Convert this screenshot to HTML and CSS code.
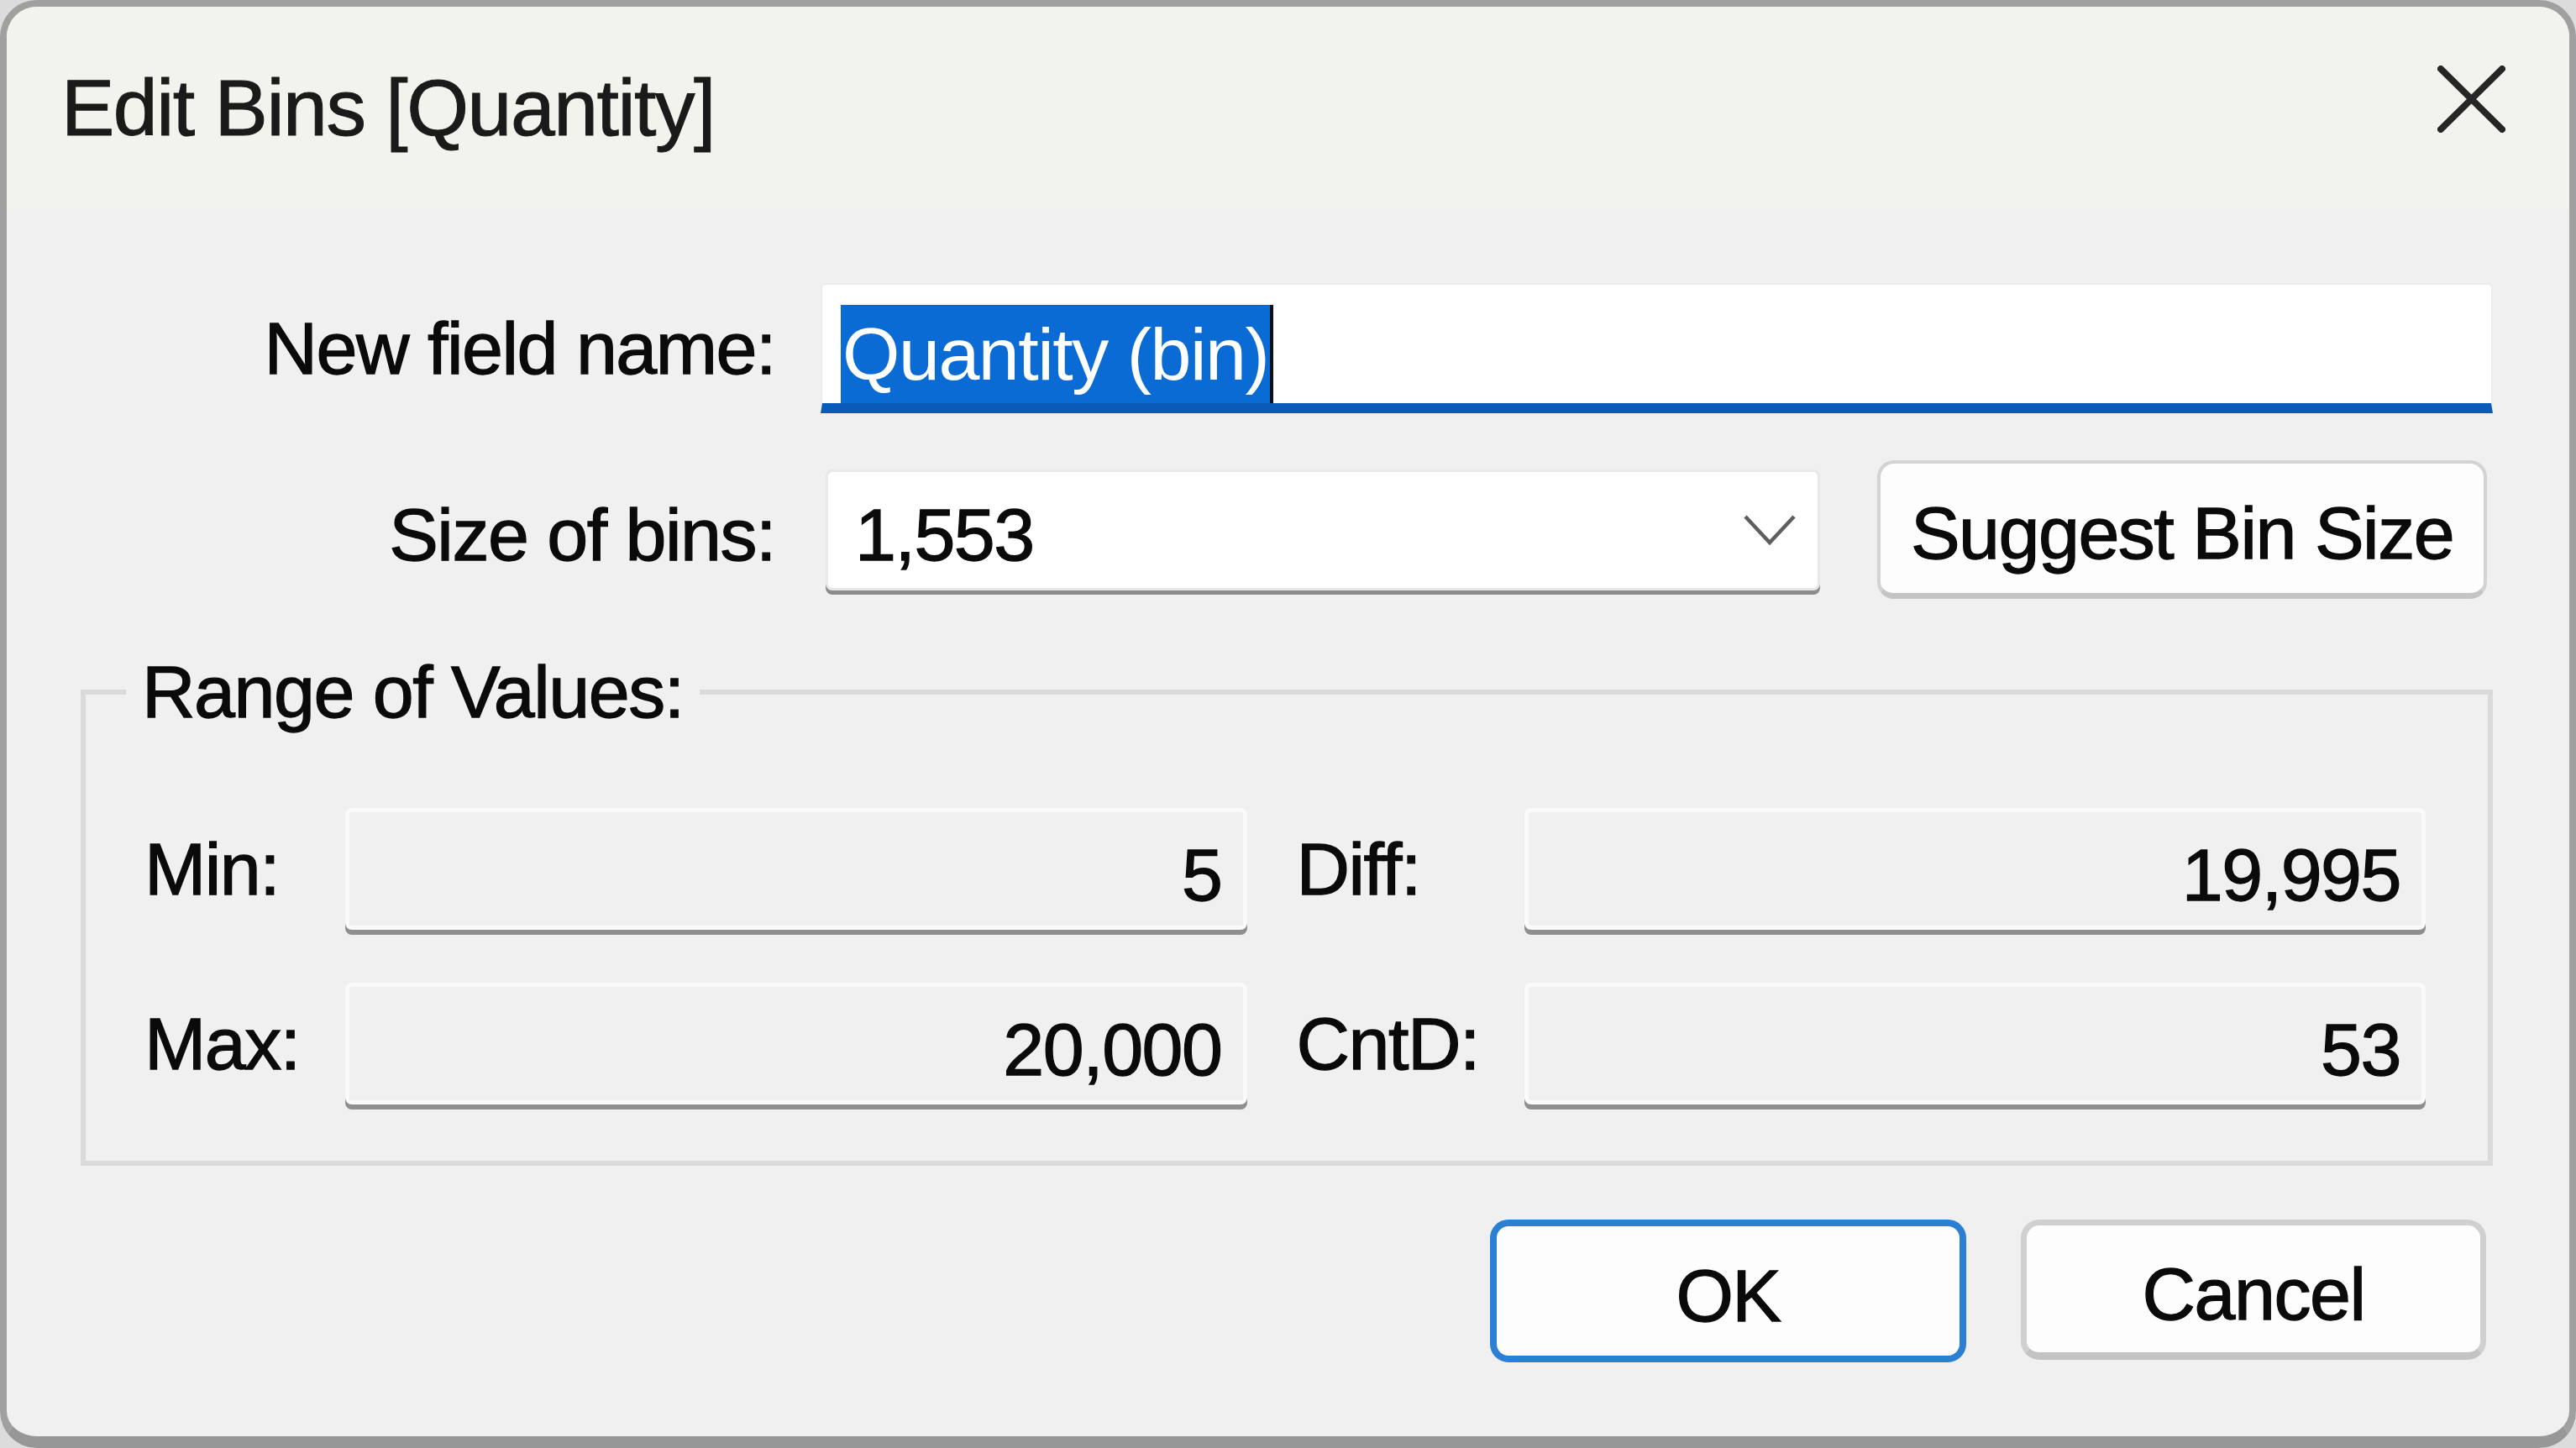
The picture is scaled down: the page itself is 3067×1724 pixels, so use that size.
FILE: index.html
```html
<!DOCTYPE html>
<html lang="en">
<head>
<meta charset="utf-8">
<title>Edit Bins [Quantity]</title>
<link rel="stylesheet" href="styles.css">
</head>
<body>
<div class="dialog">
  <div class="titlebar">
    <span class="title">Edit Bins [Quantity]</span>
    <svg class="close" width="81" height="80" viewBox="0 0 81 80" aria-label="Close">
      <path d="M4 4 L77 76 M77 4 L4 76" stroke="#262626" stroke-width="8" stroke-linecap="round" fill="none"/>
    </svg>
  </div>
  <div class="body">
    <div class="form">
      <label class="lbl">New field name:</label>
      <div class="input"><span class="sel">Quantity (bin)</span></div>
      <label class="lbl lbl-low">Size of bins:</label>
      <div class="row2">
        <div class="combo">
          <span class="combo-text">1,553</span>
          <svg class="chev" width="64" height="37" viewBox="0 0 64 37"><path d="M3 3 L32 34 L61 3" stroke="#5e5e5e" stroke-width="4.5" fill="none"/></svg>
        </div>
        <div class="btn suggest"><span class="btn-text">Suggest Bin Size</span></div>
      </div>
    </div>
    <fieldset class="group">
      <legend>Range of Values:</legend>
      <div class="stats">
        <span class="slbl">Min:</span>
        <div class="ro">5</div>
        <span class="slbl slbl-right">Diff:</span>
        <div class="ro">19,995</div>
        <span class="slbl">Max:</span>
        <div class="ro">20,000</div>
        <span class="slbl slbl-right">CntD:</span>
        <div class="ro">53</div>
      </div>
    </fieldset>
    <div class="actions">
      <div class="btn ok"><span class="btn-text">OK</span></div>
      <div class="btn cancel"><span class="btn-text">Cancel</span></div>
    </div>
  </div>
</div>
</body>
</html>
```

FILE: styles.css
```css
* { box-sizing: border-box; }
html, body {
  margin: 0;
  padding: 0;
  background: #dcdcdc;
}
body {
  font-family: "Liberation Sans", Arial, sans-serif;
  color: #0a0a0a;
}
.dialog {
  width: 3067px;
  height: 1724px;
  border: 8px solid #a0a0a0;
  border-bottom: 14px solid #979797;
  border-radius: 44px;
  overflow: hidden;
  background: #f0f0f0;
  display: flex;
  flex-direction: column;
}
.titlebar {
  height: 240px;
  flex: none;
  background: #f3f3ee;
  display: flex;
  align-items: center;
  justify-content: space-between;
  padding: 0 76px 0 65px;
}
.title {
  font-size: 95px;
  line-height: 110px;
  letter-spacing: -1.5px;
  color: #1a1a1a;
  -webkit-text-stroke: 1px #1a1a1a;
}
.close {
  display: block;
  margin-bottom: 20px;
}
.body {
  flex: 1;
  padding: 89px 91px 0 88px;
  font-size: 88px;
  letter-spacing: -1.5px;
  -webkit-text-stroke: 1.3px #0a0a0a;
}
.form {
  display: grid;
  grid-template-columns: 827px 1fr;
  column-gap: 54px;
  row-gap: 56px;
  align-items: center;
}
.lbl {
  text-align: right;
  line-height: 100px;
  white-space: nowrap;
}
.lbl-low { padding-top: 12px; }
.input {
  height: 155px;
  background: #ffffff;
  border: 2px solid #ececec;
  border-bottom: 12px solid #0a5ab8;
  border-radius: 6px 6px 0 0;
  padding-left: 22px;
  display: flex;
  align-items: flex-start;
}
.sel {
  margin-top: 24px;
  line-height: 117px;
  height: 117px;
  background: #0b6bd5;
  color: #ffffff;
  -webkit-text-stroke: 0;
  padding: 0 2px 0 2px;
  border-right: 4px solid #111111;
  white-space: nowrap;
}
.row2 {
  display: flex;
  align-items: center;
  height: 165px;
}
.combo {
  margin-left: 6px;
  width: 1184px;
  height: 144px;
  background: #ffffff;
  border: 3px solid #e8e8e8;
  border-radius: 8px;
  box-shadow: 0 5px 0 #8c8c8c;
  display: flex;
  align-items: center;
  justify-content: space-between;
  padding: 0 25px 0 32px;
}
.combo-text {
  line-height: 100px;
  padding-top: 12px;
}
.chev { display: block; }
.btn {
  display: flex;
  align-items: center;
  justify-content: center;
  background: #fdfdfd;
  border-radius: 20px;
}
.btn-text {
  line-height: 100px;
  padding-top: 12px;
  white-space: nowrap;
}
.suggest {
  margin-left: 68px;
  width: 726px;
  height: 165px;
  border: 4px solid #d3d3d3;
  border-bottom: 7px solid #c4c4c4;
}
.group {
  margin: 60px 0 0 0;
  padding: 88px 74px 67px 48px;
  border: 6px solid #dadada;
  min-width: 0;
}
.group legend {
  padding: 0 19px;
  line-height: 101px;
  white-space: nowrap;
}
.stats {
  margin-left: 22px;
  display: grid;
  grid-template-columns: 239px 1fr 330px 1fr;
  row-gap: 63px;
  align-items: center;
}
.slbl {
  line-height: 100px;
  white-space: nowrap;
}
.slbl-right { padding-left: 59px; }
.ro {
  height: 145px;
  background: #f0f0f0;
  border: 5px solid #fafafa;
  border-radius: 8px;
  box-shadow: 0 6px 0 #8f8f8f;
  text-align: right;
  line-height: 100px;
  padding: 25px 25px 0 0;
}
.actions {
  margin-top: 64px;
  padding-right: 8px;
  display: flex;
  justify-content: flex-end;
  align-items: flex-start;
  gap: 65px;
}
.ok {
  width: 567px;
  height: 170px;
  border: 8px solid #2b80d4;
  border-radius: 22px;
}
.cancel {
  width: 554px;
  height: 167px;
  border: 7px solid #d0d0d0;
  border-bottom: 9px solid #c3c3c3;
  border-radius: 22px;
}
```
